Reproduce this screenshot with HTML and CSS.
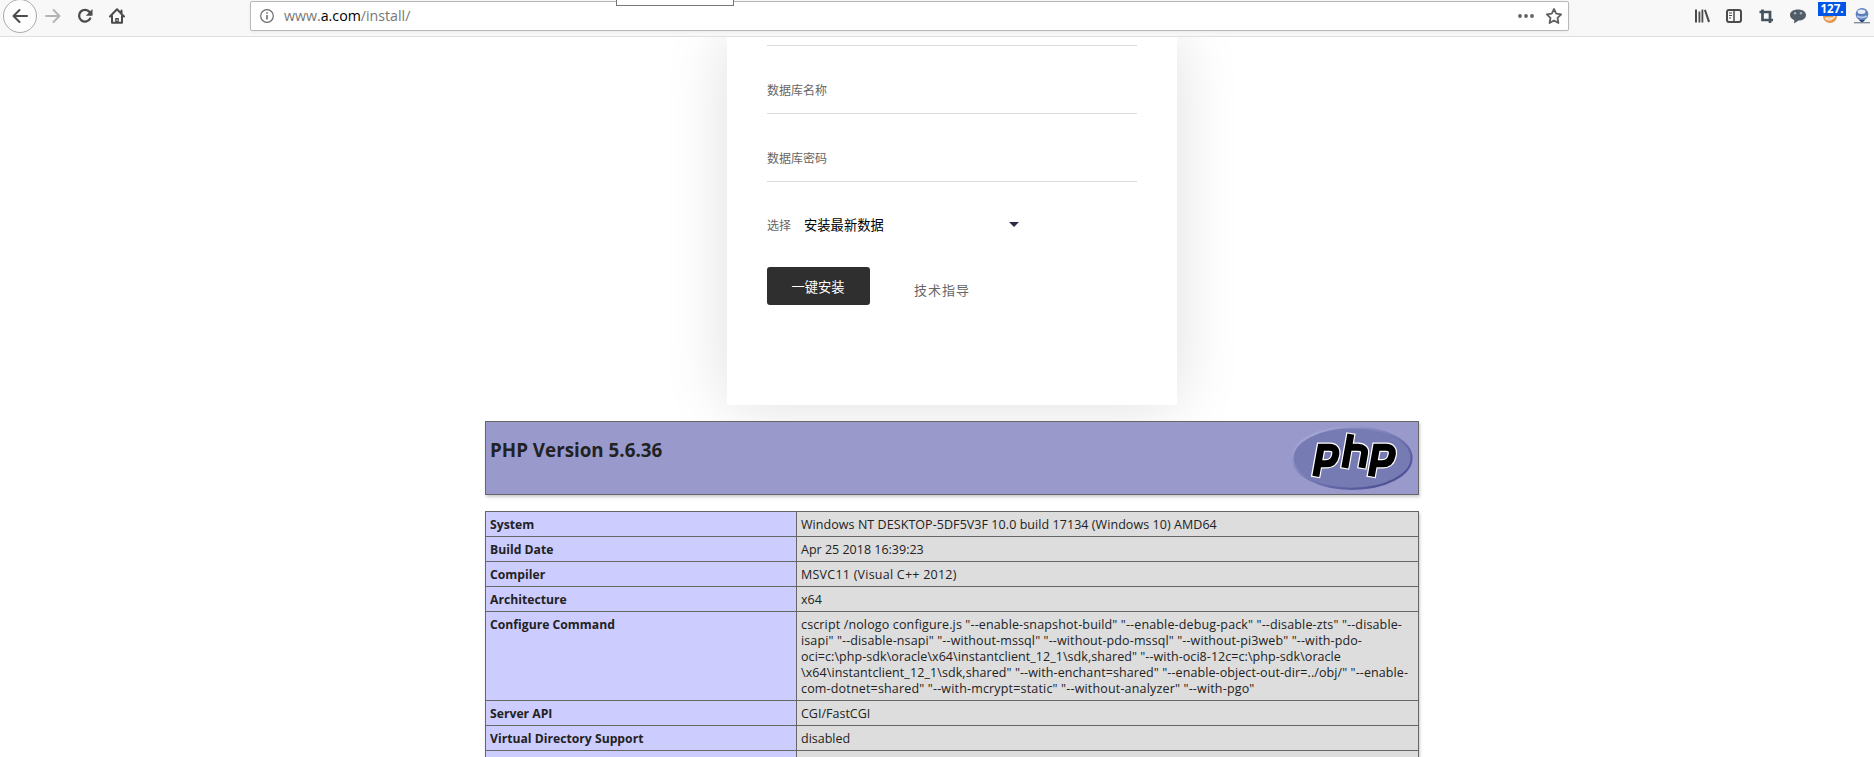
FILE: index.html
```html
<!DOCTYPE html>
<html lang="zh">
<head>
<meta charset="utf-8">
<title>安装</title>
<link rel="stylesheet" href="styles.css">
</head>
<body>
<header class="toolbar">
  <nav class="nav">
    <span class="back"><svg width="16" height="16" viewBox="0 0 16 16"><path d="M15 8H1.500M7.500 2L1.500 8l6 6" class="ln dark"/></svg></span>
    <svg class="fwd" width="16" height="16" viewBox="0 0 16 16"><path d="M1 8H14.500M8.500 2l6 6-6 6" class="ln pale"/></svg>
    <svg class="reload" width="16" height="16" viewBox="0 0 16 16"><path d="M12.600 4A5.900 5.900 0 1 0 13.200 10.500" class="ln dark heavy"/><path d="M15.500 1v6.700H8.800z" fill="#4b4b4c"/></svg>
    <svg class="home" width="16" height="16" viewBox="0 0 16 16"><path d="M1 8.500L8 1.300l7 7.200M3 8v6.800h10V8M12.500 2.500v3" class="ln dark"/><path d="M6.200 15v-5h3.600v5z" fill="#4b4b4c"/><path d="M7.600 11.500h1V13h-1z" fill="#f8f8f8"/></svg>
  </nav>
  <div class="urlbar">
    <svg width="14" height="14" viewBox="0 0 14 14"><circle cx="7" cy="7" r="6.300" fill="none" stroke="#6b6b6b" stroke-width="1.200"/><path d="M7 6v4.500M7 3.300v1.500" stroke="#6b6b6b" stroke-width="1.600"/></svg>
    <span class="url">www.<b>a.com</b>/install/</span>
    <svg class="dots" width="16" height="4" viewBox="0 0 16 4"><g fill="#626262"><circle cx="2" cy="2" r="1.900"/><circle cx="8" cy="2" r="1.900"/><circle cx="14" cy="2" r="1.900"/></g></svg>
    <svg class="star" width="16" height="16" viewBox="0 0 16 16"><path d="M8 1l2.200 4.700 5 .7-3.700 3.500.9 5.100L8 12.500 3.600 15l.9-5.100L.8 6.400l5-.7z" fill="none" stroke="#606060" stroke-width="1.800" stroke-linejoin="round"/></svg>
  </div>
  <div class="tools">
    <svg width="16" height="16" viewBox="0 0 16 16"><path d="M1 1.500h2v13H1zM4.500 3.500h1.800v11H4.500zM7.500 1.500h1.800v13H7.500zM10 2.300l1.800-.7 4.200 12-1.900.8z" fill="#4b4b4c"/></svg>
    <svg width="16" height="16" viewBox="0 0 16 16"><rect x="1" y="2" width="14" height="12" rx="2" class="ln dark"/><path d="M8 2v12" class="ln dark thin"/><path d="M3 5h3M3 7.500h3M3 10h2" stroke="#4b4b4c"/></svg>
    <svg width="16" height="16" viewBox="0 0 16 16"><path d="M1.500 4H12v11M4.500 1.500V12H15" fill="none" stroke="#46535e" stroke-width="2.700"/></svg>
    <svg width="16" height="16" viewBox="0 0 16 16"><path d="M8 1.500c4.700 0 8 2.200 8 5.400 0 3.300-3.200 5.600-7.500 5.700L4.200 15.500v-3.600C1.700 11 0 9.200 0 6.900 0 3.700 3.400 1.500 8 1.500z" fill="#505d68"/><circle cx="5" cy="5.200" r="1.200" fill="#a9b2ba"/><circle cx="11" cy="5.200" r="1.200" fill="#a9b2ba"/></svg>
    <span class="ext"><svg width="16" height="16" viewBox="0 0 16 16"><circle cx="8" cy="8" r="7" fill="#e0954a"/><path d="M3 10q5 5 10-2M4 10h7" fill="none" stroke="#fae4c9" stroke-width="1.500"/></svg><span class="badge">127.</span></span>
    <svg width="16" height="16" viewBox="0 0 16 16"><circle cx="8" cy="6.300" r="6.300" fill="#5c7fb9"/><ellipse cx="7.500" cy="3.700" rx="4" ry="2.200" fill="#e5eef9"/><path d="M3 8q5 3 10 0" fill="none" stroke="#b3c9ea" stroke-width="1.800"/><path d="M5 12h6l-3 3z" fill="#2c4470"/><path d="M0 14.700h16" stroke="#7b8697" stroke-width="1.300"/></svg>
  </div>
  <div class="tip"></div>
</header>
<main>
  <section class="card">
    <div class="field blank"></div>
    <div class="field">数据库名称</div>
    <div class="field">数据库密码</div>
    <div class="pick"><span>选择</span><span class="choice">安装最新数据</span><i class="caret"></i></div>
    <div class="actions"><button class="install">一键安装</button><a class="guide">技术指导</a></div>
  </section>
  <section class="banner">
    <h1>PHP Version 5.6.36</h1>
    <svg class="logo" width="124" height="67" viewBox="0 0 124 67">
      <defs>
        <linearGradient id="rim" x1="0" y1="0" x2="1" y2="1"><stop offset="0" stop-color="#b5b7e0"/><stop offset=".5" stop-color="#7478b3"/><stop offset="1" stop-color="#3f4189"/></linearGradient>
      </defs>
      <ellipse cx="63" cy="32" rx="59.500" ry="30.800" fill="#777bb3" stroke="url(#rim)" stroke-width="2.200"/>
      <g fill="none">
        <path stroke="#fff" stroke-width="9.500" d="M26.500 51.500L32 21.300H40.500Q48.500 21.500 46.500 29.500 45 37.700 37 37.700H29.500M55.500 43L62 7M60 21.300H69Q76.500 21.500 75.500 27.500L72.700 43M82 51.500L87.500 21.300H97Q105 21.500 103 29.500 101.500 37.700 93.500 37.700H85"/>
        <path stroke="#000" stroke-width="7" d="M26.800 50.300L32 21.300H40.500Q48.500 21.500 46.500 29.500 45 37.700 37 37.700H29.500M55.800 41.800L61.800 8.200M60 21.300H69Q76.500 21.500 75.500 27.500L72.900 41.800M82.300 50.300L87.500 21.300H97Q105 21.500 103 29.500 101.500 37.700 93.500 37.700H85"/>
      </g>
    </svg>
  </section>
  <table class="info">
    <tr><th>System</th><td><span class="r1">Windows NT DESKTOP-5DF5V3F 10.0 build 17134 (Windows 10) AMD64</span></td></tr>
    <tr><th>Build Date</th><td>Apr 25 2018 16:39:23</td></tr>
    <tr><th>Compiler</th><td><span class="r3">MSVC11 (Visual C++ 2012)</span></td></tr>
    <tr><th>Architecture</th><td>x64</td></tr>
    <tr><th>Configure Command</th><td><span class="l1">cscript /nologo configure.js "--enable-snapshot-build" "--enable-debug-pack" "--disable-zts" "--disable-</span><br><span class="l2">isapi" "--disable-nsapi" "--without-mssql" "--without-pdo-mssql" "--without-pi3web" "--with-pdo-</span><br><span class="l3">oci=c:\php-sdk\oracle\x64\instantclient_12_1\sdk,shared" "--with-oci8-12c=c:\php-sdk\oracle</span><br><span class="l4">\x64\instantclient_12_1\sdk,shared" "--with-enchant=shared" "--enable-object-out-dir=../obj/" "--enable-</span><br><span class="l5">com-dotnet=shared" "--with-mcrypt=static" "--without-analyzer" "--with-pgo"</span></td></tr>
    <tr><th>Server API</th><td>CGI/FastCGI</td></tr>
    <tr><th>Virtual Directory Support</th><td>disabled</td></tr>
    <tr><th>&nbsp;</th><td></td></tr>
  </table>
</main>
</body>
</html>
```
FILE: styles.css
```css
* { box-sizing: border-box; }
body { margin: 0; height: 757px; overflow: hidden; background: #fff; font-family: "Open Sans", "Noto Sans CJK SC", sans-serif; color: #222; }
svg { display: block; flex: none; }
.ln { fill: none; stroke-width: 2; stroke-linecap: round; stroke-linejoin: round; }
.dark { stroke: #4b4b4c; }
.pale { stroke: #b4b4b4; }
.thin { stroke-width: 1.500; }
.heavy { stroke-width: 2.300; }

.toolbar { position: relative; z-index: 2; display: flex; height: 37px; background: #f8f8f8; border-bottom: 1px solid #dfdfdf; }
.nav { display: flex; align-items: center; width: 250px; height: 32px; padding-left: 3px; }
.back { display: grid; place-items: center; width: 34px; height: 34px; border: 1px solid #aaa; border-radius: 50%; background: #fdfdfd; }
.fwd { margin-left: 8px; }
.reload { margin-left: 16px; }
.home { margin-left: 16px; }
.urlbar { display: flex; align-items: center; width: 1319px; height: 30px; margin-top: 1px; padding: 0 6px 0 9px; border: 1px solid #b8b8b8; border-radius: 2px; background: #fff; box-shadow: 0 1px 3px rgba(0,0,0,.06); }
.url { margin-left: 10px; font-size: 14.200px; line-height: 20px; color: #777; }
.url b { font-weight: 400; color: #000; }
.dots { margin-left: auto; margin-right: 12px; }
.tools { display: flex; align-items: center; gap: 16px; margin-left: 125px; height: 32px; }
.ext { position: relative; }
.badge { position: absolute; left: -4px; top: -6px; width: 28px; height: 14px; background: #0056e6; color: #fff; font: 700 11.500px/13px "Open Sans", sans-serif; text-align: center; }
.tip { position: absolute; left: 616px; top: -2px; width: 118px; height: 8px; border: 1px solid #777; background: #fff; }

main { display: flex; flex-direction: column; align-items: center; padding-left: 30px; }
.card { width: 450px; height: 368px; padding: 0 40px; background: #fff; box-shadow: 0 0 60px rgba(0,0,0,.13); color: #666; font-size: 12px; }
.field { height: 68px; padding-top: 35px; line-height: 20px; border-bottom: 1px solid #dcdcdc; }
.blank { height: 9px; padding: 0; }
.pick { display: flex; align-items: center; height: 20px; margin-top: 33px; }
.choice { margin: 0 0 2px 13px; font-size: 13.300px; color: #000; }
.caret { margin: 0 0 2px 125px; border: 5px solid transparent; border-top-color: #2c2a4a; border-bottom: 0; }
.actions { display: flex; align-items: center; margin-top: 32px; }
.install { width: 103px; height: 38px; padding: 1px 1px 0 0; border: 0; border-radius: 3px; background: #2f2f2f; color: #fff; font: 13.300px "Open Sans", "Noto Sans CJK SC", sans-serif; }
.guide { margin: 7px 0 0 44px; font-size: 13px; letter-spacing: 1px; }

.banner { display: flex; justify-content: space-between; width: 934px; height: 74px; margin-top: 16px; padding: 4px 5px 0 4px; background: #9999cc; border: 1px solid #666; box-shadow: 1px 2px 3px #ccc; }
.banner h1 { margin: 11px 0 0; font-size: 18.800px; line-height: 26px; }

.info { width: 934px; margin-top: 16px; border-collapse: collapse; table-layout: fixed; box-shadow: 1px 2px 3px #ccc; font-size: 12.500px; line-height: 16px; }
.info th, .info td { padding: 5px 5px 3px 4px; border: 1px solid #666; text-align: left; vertical-align: top; white-space: nowrap; }
.info th { width: 311px; background: #ccccff; font-size: 12.200px; }
.info td { background: #ddd; }
.r1 { letter-spacing: .06px; }
.r3 { letter-spacing: .24px; }
.l1 { letter-spacing: .14px; }
.l2 { letter-spacing: .12px; }
.l3 { letter-spacing: .06px; }
.l4 { letter-spacing: .09px; }
.l5 { letter-spacing: .17px; }
```
